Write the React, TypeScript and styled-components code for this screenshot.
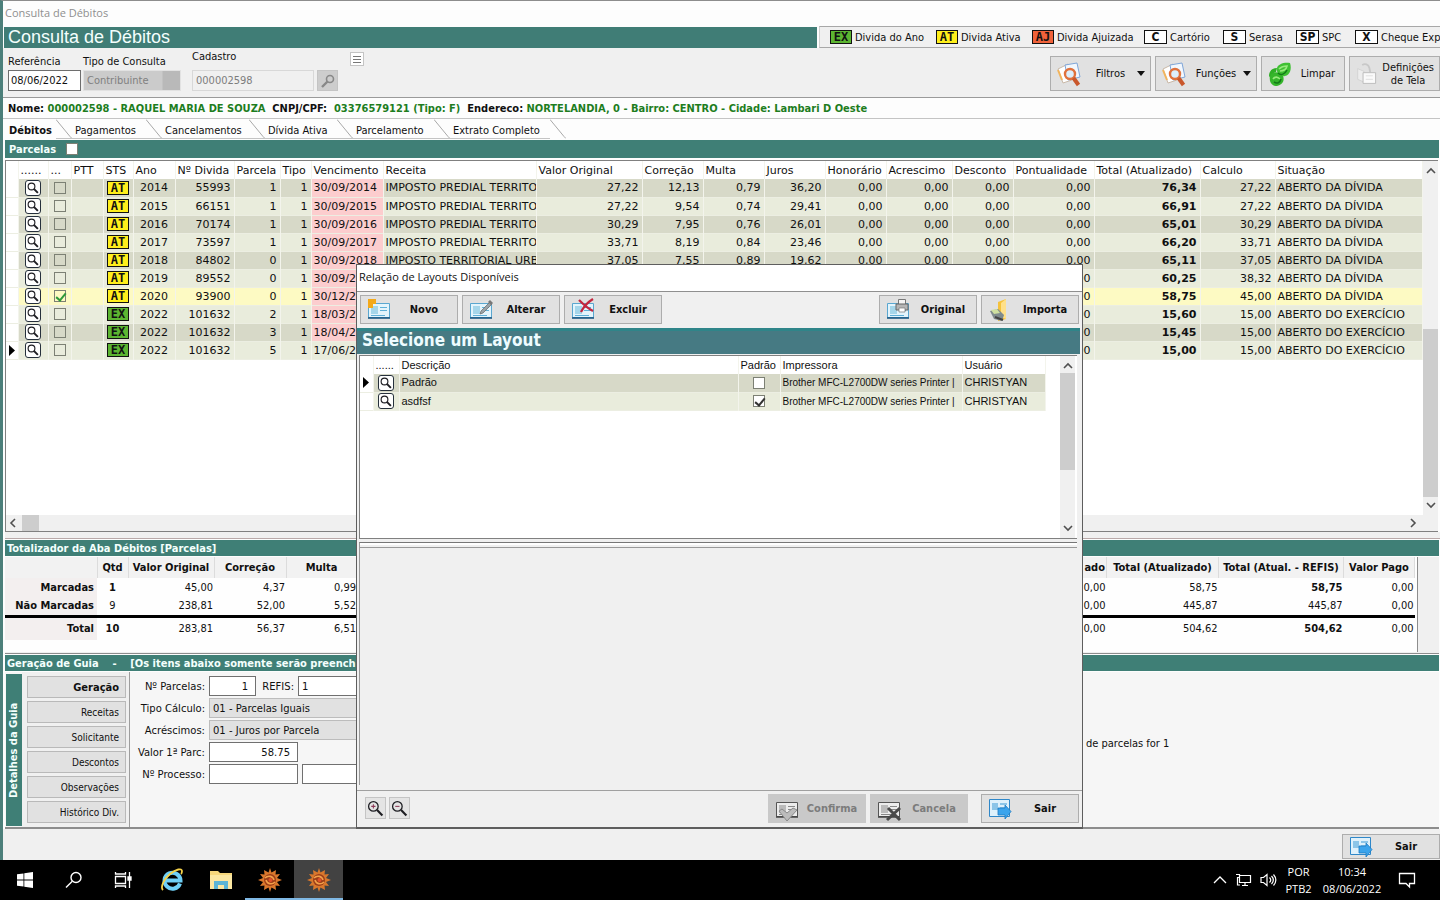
import React from "react";
import styled, { createGlobalStyle, css } from "styled-components";

const verdana = `"DejaVu Sans", Verdana, sans-serif`;
const tahoma = `"DejaVu Sans Condensed", Tahoma, sans-serif`;
const segoe = `"Open Sans", "Segoe UI", sans-serif`;
const arial = `"Liberation Sans", Arial, sans-serif`;

const Global = createGlobalStyle`
  * { box-sizing: border-box; }
  body { margin: 0; background: #f0f0f0; color: #101010; font: 11px ${tahoma}; overflow: hidden; }
  button, input, select { font: inherit; color: inherit; margin: 0; }
`;

/* ---------- shell ---------- */

const Screen = styled.div`
  position: relative;
  min-height: 100vh;
  display: flex;
  flex-direction: column;
`;
const Window = styled.main`
  flex: 1;
  display: flex;
  flex-direction: column;
  border-top: 1px solid #8d8d8d;
  border-left: 3px solid #4c7f7a;
  background: #fdfdfd;
  overflow: hidden;
`;
const WindowTitle = styled.div`
  height: 25px;
  flex: none;
  padding: 0 2px;
  font: 11px/23px ${segoe};
  color: #8f8f8f;
`;
const HeaderRow = styled.div`
  display: flex;
  flex: none;
  height: 22px;
  padding-left: 1px;
`;
const PageTitle = styled.h1`
  flex: 1;
  margin: 1px 2px 0 0;
  padding-left: 4px;
  background: #407d76;
  color: #f4fffd;
  font: 18px/20px ${arial};
`;
const Legend = styled.ul`
  flex: none;
  display: flex;
  align-items: center;
  width: 621px;
  margin: 0;
  padding: 0 0 0 10px;
  list-style: none;
  overflow: hidden;
  background: #f0f0f0;
  border-top: 1px solid #a8a8a8;
  border-bottom: 1px solid #a8a8a8;
  border-left: 1px solid #d0d0d0;
`;
const LegendItem = styled.li<{ $w: number }>`
  flex: none;
  display: flex;
  align-items: center;
  gap: 3px;
  width: ${(p) => p.$w}px;
  white-space: nowrap;
  font: 11px ${tahoma};
`;
const tones = { ex: "#5cb531", at: "#ffef1c", aj: "#f0623a", plain: "#ffffff" };
const Badge = styled.span<{ $tone: keyof typeof tones }>`
  display: flex;
  flex: none;
  align-items: center;
  justify-content: center;
  width: ${(p) => (p.$tone === "plain" ? 23 : 22)}px;
  height: 14px;
  margin: 0 auto;
  border: 1px solid #111;
  background: ${(p) => tones[p.$tone]};
  color: #111;
  font: bold 12px/12px ${(p) => (p.$tone === "plain" ? tahoma : `"DejaVu Sans Mono", monospace`)};
  li & { margin: 0; }
`;

/* ---------- search bar ---------- */

const SearchBar = styled.div`
  flex: none;
  display: flex;
  height: 50px;
  padding-left: 5px;
  background: #f0f0f0;
  border-bottom: 1px solid #9a9a9a;
  overflow: hidden;
`;
const Field = styled.label<{ $w: number; $top: number }>`
  display: flex;
  flex-direction: column;
  gap: ${(p) => 8 - p.$top}px;
  flex: none;
  width: ${(p) => p.$w}px;
  padding-top: ${(p) => p.$top}px;
  line-height: 14px;
`;
const DateInput = styled.input`
  width: 73px;
  height: 21px;
  padding: 0 0 0 2px;
  border: 1px solid #6e6e6e;
  background: #fff;
`;
const KindSelect = styled.select`
  width: 98px;
  height: 21px;
  padding: 0 3px;
  border: 1px solid #e2e2e2;
  background: linear-gradient(90deg, #cbcbcb 78px, #b9b9b9 79px);
  color: #808080;
  appearance: none;
  border-radius: 0;
  opacity: 1;
`;
const CodeInput = styled.input`
  width: 122px;
  height: 21px;
  padding: 0 3px;
  border: 1px solid #d8d8d8;
  background: #f0f0f0;
  color: #7d7d7d;
`;
const IconButton = styled.button<{ $w: number; $h: number; $bg?: string }>`
  display: flex;
  flex: none;
  align-items: center;
  justify-content: center;
  width: ${(p) => p.$w}px;
  height: ${(p) => p.$h}px;
  padding: 0;
  border: 1px solid #c4c4c4;
  background: ${(p) => p.$bg || "#e4e4e4"};
`;
const SearchTools = styled.div`
  display: flex;
  gap: 12px;
  padding-top: 4px;
  & > :first-child { margin-top: 18px; }
`;
const Actions = styled.div`
  display: flex;
  flex: none;
  gap: 4px;
  margin-left: auto;
  padding-top: 8px;
`;
const ToolButton = styled.button<{ $w: number; $h?: number; $bold?: boolean }>`
  display: flex;
  flex: none;
  align-items: center;
  gap: 4px;
  width: ${(p) => p.$w}px;
  height: ${(p) => p.$h || 35}px;
  padding: 0 5px;
  border: 1px solid #adadad;
  background: #e1e1e1;
  font: ${(p) => (p.$bold ? "bold" : "normal")} 11px/13px ${tahoma};
  &:disabled { background: #c9c9c9; border-color: #c9c9c9; color: #7c7c7c; }
  span { flex: 1; text-align: center; }
`;
const Caret = styled.i`
  border: 4px solid transparent;
  border-top: 5px solid #111;
  border-bottom: 0;
`;

/* ---------- person line and tabs ---------- */

const Person = styled.p`
  flex: none;
  height: 19px;
  margin: 2px 0 0;
  padding-left: 5px;
  border-bottom: 1px solid #c4c4c4;
  font: bold 11px/18px ${tahoma};
  white-space: pre;
  em { color: #1e7d1e; font-style: normal; }
`;
const Tabs = styled.div`
  flex: none;
  display: flex;
  height: 20px;
  padding-left: 2px;
`;
const Tab = styled.button<{ $w: number; $on?: boolean }>`
  position: relative;
  flex: none;
  width: ${(p) => p.$w}px;
  padding: 3px 0 0 ${(p) => (p.$on ? 4 : 19)}px;
  border: 0;
  border-bottom: 1px solid ${(p) => (p.$on ? "#fdfdfd" : "#c4c4c4")};
  background: none;
  text-align: left;
  white-space: nowrap;
  font-weight: ${(p) => (p.$on ? "bold" : "normal")};
  svg { position: absolute; top: 0; right: -16px; }
`;

/* ---------- panels ---------- */

const Band = styled.h2<{ $h: number }>`
  flex: none;
  display: flex;
  align-items: center;
  gap: 10px;
  height: ${(p) => p.$h}px;
  margin: 1px 1px 0 2px;
  padding-left: ${(p) => (p.$h > 16 ? 4 : 2)}px;
  background: #3f7f76;
  color: #f4fffd;
  font: bold 11px ${tahoma};
  white-space: pre;
`;
const GridPanel = styled.section`
  flex: 1;
  min-height: 120px;
  display: flex;
  flex-direction: column;
  margin: 2px 2px 0 2px;
  border: 1px solid #808080;
  border-right: 0;
  background: #fff;
`;
const GridBody = styled.div`
  flex: 1;
  display: flex;
  min-height: 0;
  overflow: hidden;
`;
const Clip = styled.div`
  flex: 1;
  min-width: 0;
  overflow: hidden;
`;
const Grid = styled.table<{ $w: number; $font: string }>`
  width: ${(p) => p.$w}px;
  table-layout: fixed;
  border-collapse: collapse;
  font: 11px/17px ${(p) => p.$font};
  th, td {
    height: 18px;
    padding: 0 3px 0 2px;
    overflow: hidden;
    white-space: nowrap;
    font-weight: normal;
    text-align: left;
    border-right: 1px solid #f3f4ec;
  }
  th { padding-right: 0; }
`;
const GridRow = styled.tr<{ $tone: "dark" | "light" | "marked" }>`
  background: ${(p) => ({ dark: "#d7d9c8", light: "#e9ecdc", marked: "#fdfac3" })[p.$tone]};
  border-bottom: 1px solid #eceee2;
  td:first-child { background: #fff; }
`;
const Cell = styled.td<{ $num?: boolean; $mid?: boolean; $strong?: boolean; $late?: boolean; $small?: boolean }>`
  ${(p) => p.$num && css`&& { text-align: right; }`}
  ${(p) => p.$mid && css`&& { text-align: center; padding: 0; }`}
  ${(p) => p.$strong && css`&& { font-weight: bold; }`}
  ${(p) => p.$late && css`background: #fccdce;`}
  ${(p) => p.$small && css`&& { padding-right: 0; font-size: 10px; }`}
  svg, input, button { display: block; margin: 0 auto; }
`;
const LoupeButton = styled.button`
  display: flex;
  align-items: center;
  justify-content: center;
  width: 16px;
  height: 16px;
  padding: 1px;
  border: 1px solid #26303c;
  border-radius: 3px;
  background: #fff;
`;
const Check = styled.input<{ $bg?: string; $tick?: string }>`
  appearance: none;
  position: relative;
  width: 12px;
  height: 12px;
  border: 1px solid #7c8074;
  background: ${(p) => p.$bg || "transparent"};
  &:checked::after {
    content: "";
    position: absolute;
    left: 3px;
    top: 0;
    width: 4px;
    height: 8px;
    border: solid ${(p) => p.$tick || "#333"};
    border-width: 0 2px 2px 0;
    transform: rotate(40deg);
  }
`;
const VScroll = styled.div<{ $top: number; $thumb: number }>`
  flex: none;
  display: flex;
  flex-direction: column;
  justify-content: space-between;
  align-items: center;
  width: 15px;
  padding: 5px 0;
  background: linear-gradient(#cdcdcd, #cdcdcd) 0 ${(p) => p.$top}px / 15px ${(p) => p.$thumb}px no-repeat #f0f0f0;
`;
const HScroll = styled.div`
  flex: none;
  display: flex;
  justify-content: space-between;
  align-items: center;
  height: 16px;
  padding: 0 20px 0 2px;
  background: linear-gradient(#cdcdcd, #cdcdcd) 16px 0 / 17px 16px no-repeat #f0f0f0;
`;

/* ---------- totals ---------- */

const Gutter = styled.div`
  flex: none;
  height: 7px;
  margin-left: 2px;
  background: #f0f0f0;
  border-bottom: 1px solid #b9a9a9;
`;
const TotalsPanel = styled.section`
  flex: none;
  height: 97px;
  margin: 1px 1px 0 2px;
  background: #f0f0f0;
  border-bottom: 1px solid #8d8d8d;
`;
const TotalsFrame = styled.div`
  height: 95px;
  margin-right: 21px;
  background: #fefefe;
  border-right: 1px solid #8d8d8d;
`;
const Totals = styled.table`
  width: calc(100% - 2px);
  table-layout: fixed;
  border-collapse: collapse;
  font: 11px/18px ${tahoma};
  th, td { padding: 0 1px; text-align: right; white-space: nowrap; height: 19px; overflow: hidden; }
  thead th { text-align: center; height: 21px; background: #f2f2f2; border-right: 1px solid #dcdcdc; }
  thead th.end { text-align: right; }
  tbody th { background: #f3efef; padding-right: 3px; }
  td:nth-child(2) { text-align: center; }
  tr.sum th, tr.sum td { height: 23px; border-top: 3px solid #000; }
  .b { font-weight: bold; }
`;

/* ---------- guide details ---------- */

const Details = styled.section`
  flex: none;
  display: flex;
  height: 157px;
  margin: 1px 1px 0 2px;
  padding-left: 1px;
  background: #f6f6f6;
  border-bottom: 2px solid #8d8d8d;
`;
const SideLabel = styled.div`
  flex: none;
  width: 16px;
  margin: 2px 0 1px;
  background: #3f7f76;
  color: #f4fffd;
  font: bold 11px/16px ${tahoma};
  writing-mode: vertical-rl;
  transform: rotate(180deg);
  text-align: center;
`;
const SideMenu = styled.nav`
  flex: none;
  display: flex;
  flex-direction: column;
  gap: 3px;
  width: 108px;
  padding: 4px 3px 0 5px;
  border-right: 1px solid #9d9d9d;
  background: #f0f0f0;
`;
const SideButton = styled.button<{ $on?: boolean }>`
  height: 22px;
  padding: 0 6px;
  border: 1px solid #b9b9b9;
  background: #e1e1e1;
  text-align: right;
  font: ${(p) => (p.$on ? `bold 11px ${tahoma}` : `10px ${tahoma}`)};
`;
const Form = styled.form`
  flex: none;
  display: flex;
  flex-direction: column;
  gap: 2px;
  width: 956px;
  padding-top: 4px;
  font: 10px ${verdana};
`;
const FormRow = styled.div`
  display: flex;
  align-items: center;
  gap: 4px;
  height: 20px;
`;
const FormLabel = styled.label<{ $w: number }>`
  flex: none;
  width: ${(p) => p.$w}px;
  text-align: right;
  white-space: nowrap;
`;
const FormInput = styled.input<{ $w: number; $right?: boolean }>`
  width: ${(p) => p.$w}px;
  height: 20px;
  padding: 0 7px 0 3px;
  border: 1px solid #707070;
  background: #fff;
  text-align: ${(p) => (p.$right ? "right" : "left")};
`;
const FormSelect = styled.select`
  width: 300px;
  height: 20px;
  padding: 0 3px;
  border: 1px solid #bcbcbc;
  border-radius: 0;
  background: #e1e1e1;
  appearance: none;
`;
const Note = styled.p`
  margin: 64px 0 0;
  font: 11px/16px ${tahoma};
  white-space: nowrap;
`;
const WindowFooter = styled.footer`
  flex: none;
  display: flex;
  justify-content: flex-end;
  height: 31px;
  padding-top: 5px;
  background: #f0f0f0;
`;

/* ---------- dialog ---------- */

const Dialog = styled.section`
  position: absolute;
  top: 264px;
  left: calc(50% - 364px);
  width: 727px;
  height: 565px;
  display: flex;
  flex-direction: column;
  border: 1px solid #5e5e5e;
  border-bottom-width: 2px;
  background: #f0f0f0;
`;
const DialogTitle = styled.div`
  flex: none;
  height: 27px;
  padding-left: 2px;
  background: #fff;
  border-bottom: 1px solid #8f8f8f;
  font: 11px/23px ${segoe};
`;
const DialogTools = styled.div`
  flex: none;
  display: flex;
  gap: 4px;
  padding: 3px;
  height: 36px;
`;
const Push = styled.div`
  flex: 1;
`;
const DialogBand = styled.h2`
  flex: none;
  height: 26px;
  margin: 0 2px 0 0;
  padding-left: 5px;
  border-top: 3px solid #2f8589;
  background: #467a83;
  color: #eefcff;
  font: bold 17px/19px ${tahoma};
`;
const DialogGrid = styled.div`
  flex: none;
  display: flex;
  height: 184px;
  margin: 1px 5px 0 2px;
  padding-right: 2px;
  border: 1px solid #808080;
  border-right: 0;
  background: #fff;
`;
const DialogBody = styled.div`
  flex: 1;
  margin: 3px 5px 5px 2px;
  border: 1px solid #777;
  border-right: 0;
  border-bottom: 0;
  border-left-color: #999;
  background: linear-gradient(#fff, #fff) 0 0 / 100% 2px no-repeat, linear-gradient(#999, #999) 0 4px / 100% 1px no-repeat, #f0f0f0;
`;
const DialogFooter = styled.footer`
  flex: none;
  display: flex;
  gap: 4px;
  height: 37px;
  padding: 3px 3px 0 8px;
  border-top: 1px solid #a0a0a0;
`;
const ZoomButtons = styled.div`
  display: flex;
  gap: 3px;
  padding-top: 3px;
`;
const LastAction = styled.div`
  margin-left: 9px;
`;

/* ---------- taskbar ---------- */

const Taskbar = styled.footer`
  flex: none;
  display: flex;
  height: 40px;
  background: #000;
  color: #fff;
  font: 11px/17px ${segoe};
`;
const TaskButton = styled.button<{ $active?: boolean; $run?: boolean }>`
  display: flex;
  align-items: center;
  justify-content: center;
  width: 49px;
  padding: 0;
  border: 0;
  background: ${(p) => (p.$active ? "#424242" : "none")};
  box-shadow: ${(p) => (p.$active || p.$run ? "inset 0 -2px #7fb8e4" : "none")};
`;
const Tray = styled.div`
  display: flex;
  align-items: center;
  gap: 8px;
  margin-left: auto;
  padding-right: 24px;
  text-align: center;
`;
const Stack = styled.div<{ $w: number }>`
  width: ${(p) => p.$w}px;
  white-space: nowrap;
`;

/* ---------- icons ---------- */

const Loupe = ({ s = 12, sign }: { s?: number; sign?: "+" | "-" }) => (
  <svg width={s} height={s} viewBox="0 0 16 16" fill="none" stroke="#1d1d22">
    <circle cx="6" cy="6" r="4.5" strokeWidth={sign ? 1.2 : 1.5} />
    <path d="M9.5 9.5l5 5" strokeWidth={sign ? 2 : 2.6} />
    {sign && <path d={sign === "+" ? "M4 6h4M6 4v4" : "M4 6h4"} stroke="#8d3a58" />}
  </svg>
);
const CardBase = ({ gray }: { gray?: boolean }) => (
  <g>
    <path d="M2.5 6.500h21v14h-21z" fill={gray ? "#ececec" : "#e3f4fc"} stroke={gray ? "#555" : "#5aa7d0"} />
    <path d="M2 21h22" stroke={gray ? "#444" : "#13507e"} strokeWidth="1.500" />
    <path d="M5 9h7v8H5z" fill={gray ? "#bbb" : "#a5d6ea"} />
    <path d="M14 10.500h7M14 13.500h7M5 18.500h14" stroke={gray ? "#888" : "#5fb0d8"} />
  </g>
);
const ExitBase = () => (
  <g>
    <path d="M2.500 3.500h20v17h-20z" fill="#dff1fb" stroke="#2f87c8" />
    <path d="M5 7h6v7H5zM13 7h7v2h-7zM13 11h6v2h-6z" fill="#8cc5e8" />
  </g>
);
const CardIcon = ({ kind }: { kind: "new" | "edit" | "delete" | "print" | "confirm" | "cancel" | "exit" }) => (
  <svg width="26" height="26" viewBox="0 0 26 26" fill="none">
    {kind === "exit" ? <ExitBase /> : <CardBase gray={kind === "confirm" || kind === "cancel"} />}
    {kind === "new" && <path d="M2 2h8v5H7v4H2z" fill="#f3a91b" />}
    {kind === "edit" && (
      <>
        <path d="M13 14l9-9 2 2-9 9-3 1z" fill="#9aa3a8" stroke="#666" strokeWidth=".7" />
        <path d="M20 5l2-2 3 3-2 2" fill="#777" />
      </>
    )}
    {kind === "delete" && <path d="M9 3c4 4 8 8 14 11M23 2c-5 3-9 7-12 13" stroke="#c3263f" strokeWidth="2.300" />}
    {kind === "print" && (
      <>
        <path d="M13.500 2.500h7v5h-7z" fill="#f4f4f4" stroke="#777" />
        <path d="M11 7h12v6H11z" fill="#b5b5b5" stroke="#666" />
        <path d="M14 11h6v4h-6z" fill="#fff" stroke="#777" strokeWidth=".7" />
      </>
    )}
    {kind === "confirm" && <path d="M5 15l3-2 5 4 6-5 4 2-10 11z" fill="#bcbcbc" stroke="#8a8a8a" />}
    {kind === "cancel" && <path d="M12 12l12 12M24 12L11 24" stroke="#4a4a4a" strokeWidth="3" />}
    {kind === "exit" && (
      <path d="M11 12h7V9l6 6.500-6 7.500v-4h-7z" fill="#3ba4ec" stroke="#1c7ac0" strokeWidth=".8" />
    )}
  </svg>
);
const ImportIcon = () => (
  <svg width="26" height="26" viewBox="0 0 26 26">
    <path d="M11 5l8-3v20l-8 2z" fill="#f5c23b" />
    <path d="M14 6l5-4v20l-5-2z" fill="#ffe08a" />
    <path d="M3 14l8-2 6 6-2 6-8-2z" fill="#7f8b8d" />
    <path d="M4 13l6-1 3 4-6 1z" fill="#cfe0a0" />
    <path d="M8 20l8 3" stroke="#444" strokeWidth="2" />
  </svg>
);
const PapersLoupeIcon = () => (
  <svg width="28" height="26" viewBox="0 0 28 26" fill="none">
    <path d="M2 8l10-5 4 16-9 3z" fill="#fff" stroke="#c9b9a8" />
    <path d="M9 4l12-2 3 14-12 3z" fill="#f2f7fd" stroke="#7fa6d8" />
    <path d="M2 9l4 10" stroke="#f2b45c" strokeWidth="2" />
    <circle cx="14" cy="13" r="5" fill="#dceefb" stroke="#e0713c" strokeWidth="2.400" />
    <path d="M17.500 17l5 7" stroke="#c9572b" strokeWidth="4" />
  </svg>
);
const RefreshIcon = () => (
  <svg width="26" height="28" viewBox="0 0 26 28" fill="none">
    <path d="M2 16c0-5 3-8 8-8l-1 4c-2 0-3 2-2 4l-1 6z" fill="#2fae26" />
    <path d="M10 8c1-4 7-6 13-5 2 6 0 12-5 13-4 1-9-2-8-8z" fill="#3fc033" />
    <path d="M3 16c2-5 9-5 13 0 2 5-1 9-6 10-6 0-8-5-7-10z" fill="#35b52b" />
    <path d="M12 9c3-3 5-3 8-3-1 4-4 5-7 5M6 19c2-3 5-2 7 0" stroke="#97ea7c" strokeWidth="1.600" />
    <path d="M11 13c3 3 7 1 9-3M7 22c3 2 6 1 7-3" stroke="#137a18" strokeWidth="1.600" />
  </svg>
);
const SettingsPageIcon = () => (
  <svg width="26" height="28" viewBox="0 0 26 28" fill="none" stroke="#b8b8b8">
    <path d="M3 8l7 3v12l-7-3z" fill="#ededed" stroke="#d2d2d2" />
    <path d="M8 4c3-2 7-1 8 3l1 5" strokeWidth="2" stroke="#c8c8c8" />
    <path d="M9 12.500h14v12H9z" fill="#fafafa" />
    <path d="M12 16h8M12 20h8" stroke="#ddd" />
  </svg>
);
const Chevron = ({ d, color = "#505050" }: { d: string; color?: string }) => (
  <svg width="10" height="10" viewBox="0 0 10 10" fill="none" stroke={color} strokeWidth="1.600">
    <path d={d} />
  </svg>
);
const Pointer = () => (
  <svg width="6" height="11" viewBox="0 0 6 11"><path d="M0 0l6 5.500L0 11z" fill="#000" /></svg>
);
const Sun = () => (
  <svg width="24" height="24" viewBox="0 0 24 24" fill="none">
    <path d="M12 0l1.500 4.500L18 2l-.5 4.500L22 6l-3 4 5 2-5 2 3 4-4.500-.5L18 22l-4.500-2.500L12 24l-1.500-4.500L6 22l.5-4.500L2 18l3-4-5-2 5-2-3-4 4.500.5L6 2l4.500 2.500z" fill="#d9772c" />
    <circle cx="12" cy="12" r="6" fill="#9c3d18" />
    <path d="M7 10c3-3 8-2 9 2M17 14c-3 3-8 2-9-2" stroke="#f3a049" strokeWidth="1.600" />
    <circle cx="12.500" cy="12" r="2" fill="#e2502a" />
  </svg>
);

/* ---------- data ---------- */

const columns: [string, number][] = [
  ["", 12], ["......", 30], ["...", 23], ["PTT", 32], ["STS", 30], ["Ano", 42], ["Nº Divida", 59], ["Parcela", 46],
  ["Tipo", 31], ["Vencimento", 72], ["Receita", 153], ["Valor Original", 106], ["Correção", 61], ["Multa", 61],
  ["Juros", 61], ["Honorário", 61], ["Acrescimo", 66], ["Desconto", 61], ["Pontualidade", 81], ["Total (Atualizado)", 106],
  ["Calculo", 75], ["Situação", 147],
];
const gridWidth = columns.reduce((sum, c) => sum + c[1], 0);

const predial = "IMPOSTO PREDIAL TERRITORIAL";
const divida = "ABERTO DA DÍVIDA";
const exercicio = "ABERTO DO EXERCÍCIO";
// ano, dívida, parcela, vencimento, receita, original, correção, multa, juros, total, cálculo, situação
const debts: string[][] = [
  ["2014", "55993", "1", "30/09/2014", predial, "27,22", "12,13", "0,79", "36,20", "76,34", "27,22", divida],
  ["2015", "66151", "1", "30/09/2015", predial, "27,22", "9,54", "0,74", "29,41", "66,91", "27,22", divida],
  ["2016", "70174", "1", "30/09/2016", predial, "30,29", "7,95", "0,76", "26,01", "65,01", "30,29", divida],
  ["2017", "73597", "1", "30/09/2017", predial, "33,71", "8,19", "0,84", "23,46", "66,20", "33,71", divida],
  ["2018", "84802", "0", "30/09/2018", "IMPOSTO TERRITORIAL URBANO", "37,05", "7,55", "0,89", "19,62", "65,11", "37,05", divida],
  ["2019", "89552", "0", "30/09/2019", "", "", "", "", "", "60,25", "38,32", divida],
  ["2020", "93900", "0", "30/12/2020", "", "", "", "", "", "58,75", "45,00", divida],
  ["2022", "101632", "2", "18/03/2022", "", "", "", "", "", "15,60", "15,00", exercicio],
  ["2022", "101632", "3", "18/04/2022", "", "", "", "", "", "15,45", "15,00", exercicio],
  ["2022", "101632", "5", "17/06/2022", "", "", "", "", "", "15,00", "15,00", exercicio],
];

const legend: [string, keyof typeof tones, string, number][] = [
  ["EX", "ex", "Divida do Ano", 106], ["AT", "at", "Divida Ativa", 96], ["AJ", "aj", "Divida Ajuizada", 112],
  ["C", "plain", "Cartório", 79], ["S", "plain", "Serasa", 73], ["SP", "plain", "SPC", 59], ["X", "plain", "Cheque Expirado", 140],
];
const tabs: [string, number][] = [
  ["Débitos", 51], ["Pagamentos", 90], ["Cancelamentos", 103], ["Dívida Ativa", 88], ["Parcelamento", 97], ["Extrato Completo", 116],
];
const totals: string[][] = [
  ["Marcadas", "1", "45,00", "4,37", "0,99", "58,75", "58,75"],
  ["Não Marcadas", "9", "238,81", "52,00", "5,52", "445,87", "445,87"],
  ["Total", "10", "283,81", "56,37", "6,51", "504,62", "504,62"],
];
const sideItems = ["Geração", "Receitas", "Solicitante", "Descontos", "Observações", "Histórico Div."];

/* ---------- parts ---------- */

const DebtRow = ({ row, index }: { row: string[]; index: number }) => {
  const marked = index === 6;
  const zero = row[4] !== "" ? "0,00" : "";
  const current = row[0] === "2022";
  return (
    <GridRow $tone={marked ? "marked" : index % 2 ? "light" : "dark"}>
      <Cell $mid>{index === 9 && <Pointer />}</Cell>
      <Cell $mid><LoupeButton aria-label="Detalhar"><Loupe /></LoupeButton></Cell>
      <Cell $mid><Check type="checkbox" aria-label={`Marcar ${row[1]}`} defaultChecked={marked} $tick="#2f9a3a" /></Cell>
      <Cell />
      <Cell $mid><Badge $tone={current ? "ex" : "at"}>{current ? "EX" : "AT"}</Badge></Cell>
      <Cell $mid>{row[0]}</Cell>
      <Cell $num>{row[1]}</Cell>
      <Cell $num>{row[2]}</Cell>
      <Cell $num>1</Cell>
      <Cell $late={index !== 9}>{row[3]}</Cell>
      <Cell>{row[4]}</Cell>
      <Cell $num>{row[5]}</Cell>
      <Cell $num>{row[6]}</Cell>
      <Cell $num>{row[7]}</Cell>
      <Cell $num>{row[8]}</Cell>
      <Cell $num>{zero}</Cell>
      <Cell $num>{zero}</Cell>
      <Cell $num>{zero}</Cell>
      <Cell $num>0,00</Cell>
      <Cell $num $strong>{row[9]}</Cell>
      <Cell $num>{row[10]}</Cell>
      <Cell>{row[11]}</Cell>
    </GridRow>
  );
};

const LayoutDialog = () => (
  <Dialog role="dialog" aria-label="Relação de Layouts Disponíveis">
    <DialogTitle>Relação de Layouts Disponíveis</DialogTitle>
    <DialogTools>
      <ToolButton $w={98} $h={29} $bold><CardIcon kind="new" /><span>Novo</span></ToolButton>
      <ToolButton $w={98} $h={29} $bold><CardIcon kind="edit" /><span>Alterar</span></ToolButton>
      <ToolButton $w={98} $h={29} $bold><CardIcon kind="delete" /><span>Excluir</span></ToolButton>
      <Push />
      <ToolButton $w={98} $h={29} $bold><CardIcon kind="print" /><span>Original</span></ToolButton>
      <ToolButton $w={98} $h={29} $bold><ImportIcon /><span>Importa</span></ToolButton>
    </DialogTools>
    <DialogBand>Selecione um Layout</DialogBand>
    <DialogGrid>
      <Clip>
        <Grid $w={685} $font={arial}>
          <colgroup>
            {[13, 26, 339, 42, 182, 83].map((w, i) => <col key={i} style={{ width: w }} />)}
          </colgroup>
          <thead>
            <tr><th /><th>......</th><th>Descrição</th><th>Padrão</th><th>Impressora</th><th>Usuário</th></tr>
          </thead>
          <tbody>
            {["Padrão", "asdfsf"].map((name, i) => (
              <GridRow key={name} $tone={i ? "light" : "dark"}>
                <Cell $mid>{i === 0 && <Pointer />}</Cell>
                <Cell $mid><LoupeButton aria-label="Visualizar"><Loupe /></LoupeButton></Cell>
                <Cell>{name}</Cell>
                <Cell $mid><Check type="checkbox" aria-label={`${name} padrão`} defaultChecked={i === 1} $bg="#fff" /></Cell>
                <Cell $small>Brother MFC-L2700DW series Printer |</Cell>
                <Cell>CHRISTYAN</Cell>
              </GridRow>
            ))}
          </tbody>
        </Grid>
      </Clip>
      <VScroll $top={17} $thumb={97}>
        <Chevron d="M1 7l4-4 4 4" />
        <Chevron d="M1 3l4 4 4-4" />
      </VScroll>
    </DialogGrid>
    <DialogBody />
    <DialogFooter>
      <ZoomButtons>
        <IconButton $w={21} $h={22} aria-label="Ampliar"><Loupe s={17} sign="+" /></IconButton>
        <IconButton $w={21} $h={22} aria-label="Reduzir"><Loupe s={17} sign="-" /></IconButton>
      </ZoomButtons>
      <Push />
      <ToolButton $w={98} $h={29} $bold disabled><CardIcon kind="confirm" /><span>Confirma</span></ToolButton>
      <ToolButton $w={98} $h={29} $bold disabled><CardIcon kind="cancel" /><span>Cancela</span></ToolButton>
      <LastAction>
        <ToolButton $w={98} $h={29} $bold><CardIcon kind="exit" /><span>Sair</span></ToolButton>
      </LastAction>
    </DialogFooter>
  </Dialog>
);

const GuideForm = () => (
  <Form>
    <FormRow>
      <FormLabel $w={75} htmlFor="parcelas">Nº Parcelas:</FormLabel>
      <FormInput $w={47} $right id="parcelas" defaultValue="1" />
      <FormLabel $w={34} htmlFor="refis">REFIS:</FormLabel>
      <FormInput $w={200} id="refis" defaultValue="1" />
    </FormRow>
    <FormRow>
      <FormLabel $w={75} htmlFor="calculo">Tipo Cálculo:</FormLabel>
      <FormSelect id="calculo"><option>01 - Parcelas Iguais</option></FormSelect>
    </FormRow>
    <FormRow>
      <FormLabel $w={75} htmlFor="acrescimos">Acréscimos:</FormLabel>
      <FormSelect id="acrescimos"><option>01 - Juros por Parcela</option></FormSelect>
    </FormRow>
    <FormRow>
      <FormLabel $w={75} htmlFor="valor">Valor 1ª Parc:</FormLabel>
      <FormInput $w={89} $right id="valor" defaultValue="58.75" />
    </FormRow>
    <FormRow>
      <FormLabel $w={75} htmlFor="processo">Nº Processo:</FormLabel>
      <FormInput $w={89} id="processo" />
      <FormInput $w={160} aria-label="Ano do processo" />
    </FormRow>
  </Form>
);

const SystemTaskbar = () => (
  <Taskbar>
    <TaskButton aria-label="Iniciar">
      <svg width="16" height="16" viewBox="0 0 16 16" fill="#fff"><path d="M0 2.300l6.500-.9v6.200H0zM7.300 1.300L16 0v7.600H7.300zM0 8.400h6.500v6.200L0 13.700zM7.300 8.400H16V16l-8.700-1.300z" /></svg>
    </TaskButton>
    <TaskButton aria-label="Pesquisar">
      <svg width="18" height="18" viewBox="0 0 18 18" fill="none" stroke="#fff" strokeWidth="1.400"><circle cx="11" cy="6.500" r="5" /><path d="M7.300 10.200L1 16.500" /></svg>
    </TaskButton>
    <TaskButton aria-label="Visão de tarefas">
      <svg width="18" height="18" viewBox="0 0 18 18" fill="none" stroke="#fff" strokeWidth="1.300"><path d="M1.500 5.500h10v7h-10zM1.500 1v2h10V1M1.500 17v-2h10v2M15.500 1v16" /><path d="M14 6h3v3h-3z" fill="#fff" /></svg>
    </TaskButton>
    <TaskButton aria-label="Internet Explorer">
      <svg width="24" height="24" viewBox="0 0 24 24" fill="none">
        <path d="M20 15.500A8 8 0 1 1 20.500 12.500H6" stroke="#6fd0f7" strokeWidth="4" />
        <path d="M3 22c-3-3 1-11 7-16s12-6 12-3c0 1 0 2-1 3" stroke="#f5d24a" strokeWidth="1.800" />
      </svg>
    </TaskButton>
    <TaskButton aria-label="Explorador de arquivos">
      <svg width="24" height="22" viewBox="0 0 24 22">
        <path d="M1 2h8l2 2h12v16H1z" fill="#f6d77c" /><path d="M1 6h22v14H1z" fill="#fbe7a2" />
        <path d="M5 20v-8h14v8h-4v-4H9v4z" fill="#5bb5d6" />
      </svg>
    </TaskButton>
    <TaskButton $run aria-label="Sistema tributário"><Sun /></TaskButton>
    <TaskButton $active aria-label="Consulta de débitos"><Sun /></TaskButton>
    <Tray>
      <svg width="14" height="14" viewBox="0 0 14 14" fill="none" stroke="#fff" strokeWidth="1.300"><path d="M1 10l6-6 6 6" /></svg>
      <svg width="17" height="16" viewBox="0 0 17 16" fill="none" stroke="#fff" strokeWidth="1.200"><path d="M4.500 3.500h11v7h-11zM7 13.500h6M10 10.500v3M1 2.500h3.500v3H2.500V13H5" /></svg>
      <svg width="17" height="16" viewBox="0 0 17 16" fill="none" stroke="#fff" strokeWidth="1.200"><path d="M1 5.500h2.500L7 2.500v11l-3.500-3H1zM9.500 5.500c1.500 1.500 1.500 3.500 0 5M11.500 4c2.300 2.500 2.300 5.500 0 8M13.500 2.500c3 3.500 3 7.500 0 11" /></svg>
      <Stack $w={27}>POR<br />PTB2</Stack>
      <Stack $w={64}>10:34<br />08/06/2022</Stack>
      <svg width="24" height="18" viewBox="8 0 24 18" fill="none" stroke="#fff" strokeWidth="1.300"><path d="M15.500 2.500h15v10h-5v3.500l-3.500-3.500h-6.500z" /></svg>
    </Tray>
  </Taskbar>
);

export default function App() {
  return (
    <Screen>
      <Global />
      <Window>
        <WindowTitle>Consulta de Débitos</WindowTitle>
        <HeaderRow>
          <PageTitle>Consulta de Débitos</PageTitle>
          <Legend>
            {legend.map(([code, tone, text, w]) => (
              <LegendItem key={code} $w={w}><Badge $tone={tone}>{code}</Badge>{text}</LegendItem>
            ))}
          </Legend>
        </HeaderRow>

        <SearchBar>
          <Field $w={75} $top={7}>Referência<DateInput defaultValue="08/06/2022" /></Field>
          <Field $w={109} $top={7}>Tipo de Consulta
            <KindSelect disabled><option>Contribuinte</option></KindSelect>
          </Field>
          <Field $w={125} $top={2}>Cadastro<CodeInput disabled defaultValue="000002598" /></Field>
          <SearchTools>
            <IconButton $w={21} $h={21} $bg="#cdcdcd" aria-label="Buscar cadastro">
              <svg width="14" height="14" viewBox="0 0 14 14" fill="none" stroke="#888" strokeWidth="1.600"><circle cx="9" cy="5" r="3.500" /><path d="M6.500 7.500L1 13" strokeWidth="2.400" /></svg>
            </IconButton>
            <IconButton $w={14} $h={14} $bg="#fff" aria-label="Menu">
              <svg width="10" height="10" viewBox="0 0 10 10" stroke="#777"><path d="M1 2.500h8M1 5.500h8M1 8.500h8" /></svg>
            </IconButton>
          </SearchTools>
          <Actions>
            <ToolButton $w={101}><PapersLoupeIcon /><span>Filtros</span><Caret /></ToolButton>
            <ToolButton $w={102}><PapersLoupeIcon /><span>Funções</span><Caret /></ToolButton>
            <ToolButton $w={84}><RefreshIcon /><span>Limpar</span></ToolButton>
            <ToolButton $w={91}><SettingsPageIcon /><span>Definições de Tela</span></ToolButton>
          </Actions>
        </SearchBar>

        <Person>
          Nome: <em>000002598 - RAQUEL MARIA DE SOUZA</em>  CNPJ/CPF:  <em>03376579121 (Tipo: F)</em>  Endereco: <em>NORTELANDIA, 0 - Bairro: CENTRO - Cidade: Lambari D Oeste</em>
        </Person>
        <Tabs>
          {tabs.map(([name, w], i) => (
            <Tab key={name} $w={w} $on={i === 0}>
              {name}
              <svg width="16" height="20" viewBox="0 0 16 20" fill="none" stroke="#a8a8a8"><path d="M0 .5l14 17 2 2" /></svg>
            </Tab>
          ))}
        </Tabs>

        <Band $h={18}>Parcelas<Check type="checkbox" aria-label="Marcar todas as parcelas" $bg="#fff" /></Band>
        <GridPanel>
          <GridBody>
            <Clip>
              <Grid $w={gridWidth} $font={verdana}>
                <colgroup>{columns.map(([, w], i) => <col key={i} style={{ width: w }} />)}</colgroup>
                <thead><tr>{columns.map(([name], i) => <th key={i}>{name}</th>)}</tr></thead>
                <tbody>{debts.map((row, i) => <DebtRow key={i} row={row} index={i} />)}</tbody>
              </Grid>
            </Clip>
            <VScroll $top={168} $thumb={168}>
              <Chevron d="M1 7l4-4 4 4" />
              <Chevron d="M1 3l4 4 4-4" />
            </VScroll>
          </GridBody>
          <HScroll>
            <Chevron d="M7 1L3 5l4 4" />
            <Chevron d="M3 1l4 4-4 4" />
          </HScroll>
        </GridPanel>

        <Gutter />
        <Band $h={16}>Totalizador da Aba Débitos [Parcelas]</Band>
        <TotalsPanel>
          <TotalsFrame>
            <Totals>
              <colgroup>
                {[92, 31, 86, 72, 71, 0, 70, 112, 125, 71].map((w, i) => <col key={i} style={w ? { width: w } : undefined} />)}
              </colgroup>
              <thead>
                <tr>
                  <th /><th>Qtd</th><th>Valor Original</th><th>Correção</th><th>Multa</th><th /><th className="end">ado</th>
                  <th>Total (Atualizado)</th><th>Total (Atual. - REFIS)</th><th>Valor Pago</th>
                </tr>
              </thead>
              <tbody>
                {totals.map((t, i) => (
                  <tr key={t[0]} className={i === 2 ? "sum" : undefined}>
                    <th>{t[0]}</th>
                    <td className={i !== 1 ? "b" : undefined}>{t[1]}</td>
                    <td>{t[2]}</td><td>{t[3]}</td><td>{t[4]}</td><td /><td>0,00</td>
                    <td>{t[5]}</td>
                    <td className={i !== 1 ? "b" : undefined}>{t[6]}</td>
                    <td>0,00</td>
                  </tr>
                ))}
              </tbody>
            </Totals>
          </TotalsFrame>
        </TotalsPanel>

        <Band $h={16}>{"Geração de Guia    -    [Os itens abaixo somente serão preench"}</Band>
        <Details>
          <SideLabel>Detalhes da Guia</SideLabel>
          <SideMenu>
            {sideItems.map((name, i) => <SideButton key={name} $on={i === 0}>{name}</SideButton>)}
          </SideMenu>
          <GuideForm />
          <Note>de parcelas for 1</Note>
        </Details>
        <WindowFooter>
          <ToolButton $w={98} $h={25} $bold><CardIcon kind="exit" /><span>Sair</span></ToolButton>
        </WindowFooter>
      </Window>
      <SystemTaskbar />
      <LayoutDialog />
    </Screen>
  );
}
